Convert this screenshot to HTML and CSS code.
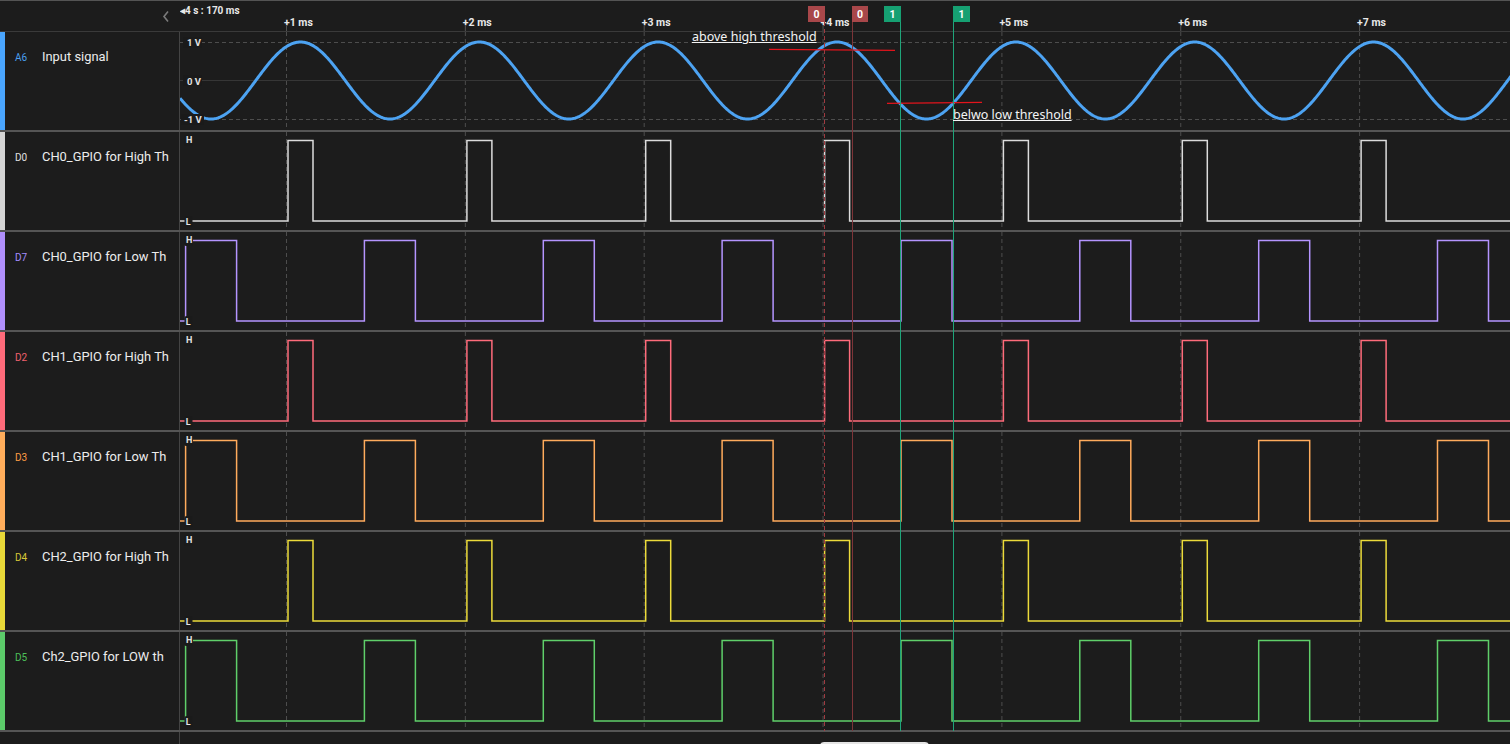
FILE: index.html
```html
<!DOCTYPE html>
<html lang="en">
<head>
<meta charset="utf-8">
<title>Logic analyzer</title>
<link rel="stylesheet" href="styles.css">
</head>
<body>
<div class="app">
  <div class="header">
    <div class="header-left">
      <svg class="chev" width="12" height="30" viewBox="0 0 12 30"><polyline points="8,10.5 4,15.5 8,20.5" /></svg>
    </div>
    <svg class="axis" id="axis" width="1330" height="30" viewBox="0 0 1330 30">
      <text class="abs" x="0" y="12.5">&#9666;4 s : 170 ms</text>
    </svg>
  </div>

  <div class="rows">
    <div class="row">
      <div class="label"><span class="strip c-a6"></span><span class="tag t-a6">A6</span><span class="name">Input signal</span></div>
      <div class="plot"><svg class="wave" data-kind="sine" width="1330" height="98" viewBox="0 0 1330 98"></svg></div>
    </div>
    <div class="row">
      <div class="label"><span class="strip c-d0"></span><span class="tag t-d0">D0</span><span class="name">CH0_GPIO for High Th</span></div>
      <div class="plot"><svg class="wave" data-kind="high" data-color="#dcdcdc" width="1330" height="98" viewBox="0 0 1330 98"></svg></div>
    </div>
    <div class="row">
      <div class="label"><span class="strip c-d7"></span><span class="tag t-d7">D7</span><span class="name">CH0_GPIO for Low Th</span></div>
      <div class="plot"><svg class="wave" data-kind="low" data-color="#b494ff" width="1330" height="98" viewBox="0 0 1330 98"></svg></div>
    </div>
    <div class="row">
      <div class="label"><span class="strip c-d2"></span><span class="tag t-d2">D2</span><span class="name">CH1_GPIO for High Th</span></div>
      <div class="plot"><svg class="wave" data-kind="high" data-color="#ff6b7b" width="1330" height="98" viewBox="0 0 1330 98"></svg></div>
    </div>
    <div class="row">
      <div class="label"><span class="strip c-d3"></span><span class="tag t-d3">D3</span><span class="name">CH1_GPIO for Low Th</span></div>
      <div class="plot"><svg class="wave" data-kind="low" data-color="#ffab5c" width="1330" height="98" viewBox="0 0 1330 98"></svg></div>
    </div>
    <div class="row">
      <div class="label"><span class="strip c-d4"></span><span class="tag t-d4">D4</span><span class="name">CH2_GPIO for High Th</span></div>
      <div class="plot"><svg class="wave" data-kind="high" data-color="#ecdb3a" width="1330" height="98" viewBox="0 0 1330 98"></svg></div>
    </div>
    <div class="row">
      <div class="label"><span class="strip c-d5"></span><span class="tag t-d5">D5</span><span class="name">Ch2_GPIO for LOW th</span></div>
      <div class="plot"><svg class="wave" data-kind="low" data-color="#5fcf6a" width="1330" height="98" viewBox="0 0 1330 98"></svg></div>
    </div>
  </div>

  <div class="footer">
    <div class="footer-left"></div>
    <div class="pill"></div>
  </div>

  <svg class="overlay" width="1510" height="744" viewBox="0 0 1510 744">
    <line class="thr" x1="769" y1="49.3" x2="895" y2="50.3" />
    <line class="thr" x1="887" y1="103.3" x2="982" y2="102.3" />
    <line class="mk-red mk-dash" x1="824.5" y1="22" x2="824.5" y2="731" />
    <line class="mk-red" x1="852.5" y1="22" x2="852.5" y2="731" />
    <line class="mk-green" x1="900.5" y1="22" x2="900.5" y2="731" />
    <line class="mk-green" x1="953.5" y1="22" x2="953.5" y2="731" />
    <rect class="box-red" x="808" y="6" width="17" height="16" />
    <rect class="box-red" x="852" y="6" width="16" height="16" />
    <rect class="box-green" x="884" y="6" width="17" height="16" />
    <rect class="box-green" x="953" y="6" width="17" height="16" />
    <text class="box-t" x="816.5" y="18">0</text>
    <text class="box-t" x="860" y="18">0</text>
    <text class="box-t" x="892.5" y="18">1</text>
    <text class="box-t" x="961.5" y="18">1</text>
  </svg>
  <div class="note note-high">above high threshold</div>
  <div class="note note-low">belwo low threshold</div>
</div>
<script src="script.js"></script>
</body>
</html>
```

FILE: styles.css
```css
html, body {
  margin: 0;
  padding: 0;
  background: #1c1c1c;
}
body {
  font-family: Roboto, "Noto Sans", sans-serif;
  overflow: hidden;
}
.app {
  position: relative;
  width: 1510px;
  height: 744px;
  border-top: 1px solid #545454;
  box-sizing: border-box;
  background: #1c1c1c;
}
.header {
  display: flex;
  height: 30px;
  border-bottom: 1px solid #3a3a3a;
}
.header-left {
  width: 180px;
  flex: none;
  display: flex;
  justify-content: flex-end;
  padding-right: 8px;
  box-sizing: border-box;
}
.chev {
  display: block;
}
.chev polyline {
  fill: none;
  stroke: #7a7a7a;
  stroke-width: 1.6;
}
.axis {
  display: block;
  flex: none;
}
.axis text {
  font-family: Roboto, sans-serif;
  font-weight: 700;
  fill: #e8e8e8;
}
.axis .abs {
  font-size: 10px;
}
.axis .tl {
  font-size: 10.5px;
}
.axis .tick {
  stroke: #555;
  stroke-width: 1;
}
.rows {
  display: flex;
  flex-direction: column;
}
.row {
  display: flex;
  height: 98px;
  border-bottom: 2px solid #555;
}
.label {
  width: 179px;
  flex: none;
  border-right: 1px solid #444;
  display: flex;
  align-items: flex-start;
}
.strip {
  width: 5px;
  flex: none;
  align-self: stretch;
}
.tag {
  width: 27px;
  margin-left: 10px;
  margin-top: 20px;
  font-size: 10px;
  line-height: 12px;
  flex: none;
}
.name {
  margin-top: 17px;
  font-size: 12.9px;
  line-height: 15px;
  color: #ececec;
  white-space: nowrap;
}
.c-a6 { background: #4aa6ff; }
.c-d0 { background: #d4d4d4; }
.c-d7 { background: #b08ffc; }
.c-d2 { background: #ff6b7a; }
.c-d3 { background: #ffad5b; }
.c-d4 { background: #e8d838; }
.c-d5 { background: #5ccb6a; }
.t-a6 { color: #4a9ff0; }
.t-d0 { color: #e0e0e0; }
.t-d7 { color: #a58cff; }
.t-d2 { color: #f0606e; }
.t-d3 { color: #ff9d45; }
.t-d4 { color: #d8c838; }
.t-d5 { color: #4cc05a; }
.plot {
  flex: 1;
  overflow: hidden;
}
.plot svg {
  display: block;
}
.grid {
  stroke: #4d4d4d;
  stroke-width: 1;
  stroke-dasharray: 4 3;
}
.hdash {
  stroke: #4d4d4d;
  stroke-width: 1;
  stroke-dasharray: 4 3;
}
.zero {
  stroke: #363636;
  stroke-width: 1;
}
.sine {
  fill: none;
  stroke: #4da3f2;
  stroke-width: 3;
  stroke-linejoin: round;
}
.dig {
  fill: none;
  stroke-width: 1.5;
}
.lbl-bg {
  fill: #1a1a1a;
}
.lbl {
  font-family: Roboto, sans-serif;
  font-weight: 700;
  font-size: 9px;
  fill: #e2e2e2;
}
.vlbl {
  font-size: 9.5px;
}
.footer {
  display: flex;
  height: 12px;
}
.footer-left {
  width: 179px;
  flex: none;
  border-right: 1px solid #444;
}
.pill {
  margin-left: 640px;
  margin-top: 10px;
  width: 109px;
  height: 8px;
  border-radius: 6px;
  background: #e4e4e4;
}
.overlay {
  position: absolute;
  left: 0;
  top: -1px;
  pointer-events: none;
}
.thr {
  stroke: #e3141c;
  stroke-width: 1.2;
}
.mk-red {
  stroke: #7d3438;
  stroke-width: 1;
}
.mk-dash {
  stroke: #a03a40;
  stroke-dasharray: 4 3;
}
.mk-green {
  stroke: #1fa57a;
  stroke-width: 1;
}
.box-red {
  fill: #a8474a;
}
.box-green {
  fill: #16a072;
}
.box-t {
  font-family: Roboto, sans-serif;
  font-weight: 700;
  font-size: 10.5px;
  fill: #ffffff;
  text-anchor: middle;
}
.note {
  position: absolute;
  font-family: "Noto Sans", "Open Sans", sans-serif;
  font-size: 12.5px;
  line-height: 14px;
  color: #f4f4f4;
  text-decoration: underline;
  text-underline-offset: 1px;
  white-space: nowrap;
}
.note-high {
  left: 692px;
  top: 29px;
}
.note-low {
  left: 953px;
  top: 107px;
}
```

FILE: script.js
```js
(function () {
  var NS = 'http://www.w3.org/2000/svg';
  var P = 178.85, PEAK = 300.5, X0 = 180, W = 1330;
  var H = 8.5, L = 89;
  var grid = [];
  for (var k = 1; k <= 7; k++) grid.push(286.5 + (k - 1) * P);

  function el(tag, attrs, parent, text) {
    var e = document.createElementNS(NS, tag);
    for (var a in attrs) e.setAttribute(a, attrs[a]);
    if (text) e.textContent = text;
    parent.appendChild(e);
    return e;
  }

  var axis = document.getElementById('axis');
  grid.forEach(function (g, i) {
    el('line', { x1: g - X0, x2: g - X0, y1: 25, y2: 30, 'class': 'tick' }, axis);
    el('text', { x: g - X0 - 2.5, y: 24.5, 'class': 'tl' }, axis, '+' + (i + 1) + ' ms');
  });

  function label(svg, x, y, w, h, tx, ty, txt, extra) {
    el('rect', { x: x, y: y, width: w, height: h, rx: 2, 'class': 'lbl-bg' }, svg);
    el('text', { x: tx, y: ty, 'class': 'lbl' + (extra ? ' ' + extra : '') }, svg, txt);
  }

  var svgs = document.querySelectorAll('svg.wave');
  Array.prototype.forEach.call(svgs, function (svg) {
    var kind = svg.getAttribute('data-kind');
    var color = svg.getAttribute('data-color');
    grid.forEach(function (g) {
      el('line', { x1: g - X0, x2: g - X0, y1: 0, y2: 98, 'class': 'grid' }, svg);
    });
    if (kind === 'sine') {
      el('line', { x1: 0, x2: W, y1: 10.5, y2: 10.5, 'class': 'hdash' }, svg);
      el('line', { x1: 0, x2: W, y1: 48.5, y2: 48.5, 'class': 'zero' }, svg);
      el('line', { x1: 0, x2: W, y1: 87.5, y2: 87.5, 'class': 'hdash' }, svg);
      var d = '';
      for (var x = X0; x <= X0 + W + 2; x += 1) {
        var y = 48.5 - 38.5 * Math.cos(2 * Math.PI * (x - PEAK) / P);
        d += (x === X0 ? 'M' : 'L') + (x - X0) + ' ' + y.toFixed(2) + ' ';
      }
      el('path', { d: d, 'class': 'sine' }, svg);
      label(svg, 3, 5, 19, 11, 7, 14, '1 V', 'vlbl');
      label(svg, 3, 43, 19, 11, 7, 52.5, '0 V', 'vlbl');
      label(svg, 1, 82, 23, 11, 4, 91.3, '-1 V', 'vlbl');
    } else {
      var hw = kind === 'high' ? 12.5 : 25.5;
      var c0 = kind === 'high' ? PEAK : PEAK - P / 2;
      var p = 'M0 ' + L;
      for (var c = c0 - 2 * P; c - hw < X0 + W; c += P) {
        var a = c - hw - X0, b = c + hw - X0;
        if (b <= 0) continue;
        a = Math.max(a, 0);
        p += ' L' + a.toFixed(1) + ' ' + L + ' L' + a.toFixed(1) + ' ' + H +
             ' L' + b.toFixed(1) + ' ' + H + ' L' + b.toFixed(1) + ' ' + L;
      }
      p += ' L' + (W + 2) + ' ' + L;
      el('path', { d: p, 'class': 'dig', stroke: color }, svg);
      label(svg, 4, 3, 9, 11, 6, 11.3, 'H');
      label(svg, 4.5, 84, 8, 11, 5.7, 93, 'L');
    }
  });
})();
```
